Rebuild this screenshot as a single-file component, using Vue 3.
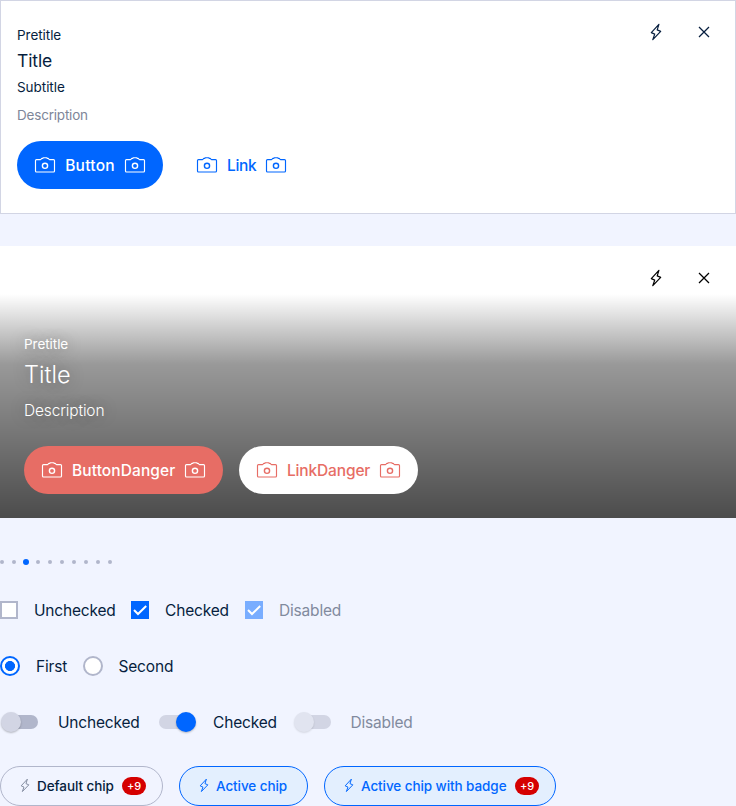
<script setup>
import { h } from 'vue'

const Camera = () =>
  h('svg', { class: 'camera', viewBox: '0 0 24 24', width: 24, height: 24 }, [
    h('path', {
      'stroke-width': 1.15,
      d: 'M3.5 6.6H7.2Q7.9 6.6 8.1 6.1L8.3 5.8Q8.5 5.4 9.1 5.4H9.8L10.4 4.7H13.6L14.2 5.4H14.9Q15.5 5.4 15.7 5.8L15.9 6.1Q16.1 6.6 16.8 6.6H20.5Q21.5 6.6 21.5 7.6V18Q21.5 19 20.5 19H3.5Q2.5 19 2.5 18V7.6Q2.5 6.6 3.5 6.6Z'
    }),
    h('circle', { cx: 12, cy: 12.8, r: 2.6, 'stroke-width': 1.4 })
  ])

const Bolt = (props) =>
  h('svg', { viewBox: props.size < 20 ? '2.2 3 19.6 19.6' : '0 0 24 24', width: props.size, height: props.size }, [
    h('path', { 'stroke-width': 1.2, d: 'M14.9 4.4L7.3 12.6L10.7 14.1L8.8 19.6L16.7 11.4L13.2 9.9Z' })
  ])
Bolt.props = ['size']

const Close = () =>
  h('svg', { viewBox: '0 0 24 24', width: 24, height: 24 }, [
    h('path', { d: 'M7 7L17 17M17 7L7 17', 'stroke-width': 1.25 })
  ])

const dots = 10
const activeDot = 2
const chips = [
  { label: 'Default chip', kind: 'plain', badge: '+9' },
  { label: 'Active chip', kind: 'active' },
  { label: 'Active chip with badge', kind: 'active wide', badge: '+9' }
]
</script>

<template>
  <main class="page">
    <section class="card">
      <div class="actions"><Bolt :size="24" /><Close /></div>
      <p class="small pretitle">Pretitle</p>
      <h2 class="title">Title</h2>
      <p class="small subtitle">Subtitle</p>
      <p class="small description">Description</p>
      <div class="buttons">
        <button class="btn primary"><Camera /><span class="t-button">Button</span><Camera /></button>
        <button class="btn link"><Camera /><span class="t-link">Link</span><Camera /></button>
      </div>
    </section>

    <section class="hero">
      <div class="actions dark"><Bolt :size="24" /><Close /></div>
      <div class="shade">
        <p class="small hero-pre">Pretitle</p>
        <h2 class="hero-title">Title</h2>
        <p class="hero-desc">Description</p>
        <div class="buttons">
          <button class="btn danger"><Camera /><span class="t-bd">ButtonDanger</span><Camera /></button>
          <button class="btn white"><Camera /><span class="t-ld">LinkDanger</span><Camera /></button>
        </div>
      </div>
    </section>

    <div class="dots">
      <span v-for="i in dots" :key="i" class="dot"><i :class="{ on: i - 1 === activeDot }"></i></span>
    </div>

    <div class="row checks">
      <label class="w131"><span class="box"></span><span class="text">Unchecked</span></label>
      <label class="w114"><span class="box on"><svg viewBox="0 0 18 18" width="18" height="18"><path d="M3 9L7 13L15.2 5" /></svg></span><span class="text">Checked</span></label>
      <label class="off"><span class="box on"><svg viewBox="0 0 18 18" width="18" height="18"><path d="M3 9L7 13L15.2 5" /></svg></span><span class="text">Disabled</span></label>
    </div>

    <div class="row radios">
      <label class="w83"><span class="radio on"></span><span class="text">First</span></label>
      <label><span class="radio"></span><span class="text">Second</span></label>
    </div>

    <div class="row switches">
      <label class="w155"><span class="switch"><i></i></span><span class="text">Unchecked</span></label>
      <label class="w138"><span class="switch on"><i></i></span><span class="text">Checked</span></label>
      <label class="off"><span class="switch"><i></i></span><span class="text">Disabled</span></label>
    </div>

    <div class="chips">
      <span v-for="c in chips" :key="c.label" class="chip" :class="c.kind">
        <Bolt :size="16" /><span class="chip-text">{{ c.label }}</span><b v-if="c.badge">{{ c.badge }}</b>
      </span>
    </div>
  </main>
</template>

<style>
body { background: #f1f4ff; overflow: hidden; }
</style>

<style scoped>
.page { width: 736px; height: 806px; overflow: hidden; font-family: Inter, "Liberation Sans", sans-serif; color: #061e3e; background: #f1f4ff; }
.page * { box-sizing: border-box; }
p, h2 { margin: 0; font-weight: 300; white-space: nowrap; }
svg { display: block; flex: none; fill: none; stroke: currentColor; stroke-width: 1; stroke-linejoin: round; }
.card { position: relative; height: 214px; padding: 24px 16px; background: #fff; border: 1px solid #d2d5e4; }
.actions { position: absolute; top: 19px; right: 19px; display: flex; gap: 24px; }
.small { font-size: 13.5px; line-height: 20px; font-weight: 370; letter-spacing: -0.05px; }
.title { font-size: 17.5px; line-height: 24px; margin: 4px 0; font-weight: 370; letter-spacing: -0.1px; }
.description { margin-top: 8px; color: #7e8699; letter-spacing: -0.2px; }
.buttons { display: flex; gap: 16px; margin-top: 16px; }
.btn { display: flex; align-items: center; height: 48px; gap: 8px; padding: 0 16px; border: 0; border-radius: 24px; font: 500 15.5px Inter, sans-serif; background: none; white-space: nowrap; }
.btn span { padding-top: 1px; }
.t-button { width: 50px; letter-spacing: 0.25px; }
.t-link { width: 29px; letter-spacing: -0.3px; }
.t-bd { width: 103px; letter-spacing: 0.1px; }
.t-ld { width: 83px; letter-spacing: -0.15px; }
.primary { background: #0066ff; color: #fff; }
.link { color: #0066ff; }
.danger { background: #e76d65; color: #fff; }
.white { background: #fff; color: #e76d65; }
.hero { position: relative; height: 272px; margin-top: 32px; padding-top: 48px; background: #fff; color: #fff; }
.actions.dark { top: 20px; right: 20px; color: #000; }
.shade { height: 224px; padding: 40px 24px 24px; background: linear-gradient(to bottom, rgba(0,0,0,0) 0, rgba(0,0,0,.4) 70px, rgba(0,0,0,.7) 100%); }
.shade p, .shade h2 { text-shadow: 0 0 16px rgba(0,0,0,.4); }
.hero-title { font-size: 23.5px; line-height: 32px; margin-top: 5px; }
.hero-desc { font-size: 15.5px; line-height: 24px; margin-top: 8px; font-weight: 330; letter-spacing: -0.15px; }
.shade .buttons { margin-top: 23px; }
.dots { display: flex; height: 12px; margin: 38px 0 0 -4px; }
.dot { display: flex; width: 12px; height: 12px; align-items: center; justify-content: center; }
.dot i { width: 4px; height: 4px; border-radius: 50%; background: #b1b6cb; }
.dot i.on { width: 6px; height: 6px; background: #0066ff; }
.row { display: flex; height: 24px; font-size: 15.5px; font-weight: 370; letter-spacing: -0.18px; }
.row label { display: flex; align-items: center; white-space: nowrap; }
.text { padding-top: 1px; }
.checks { margin-top: 30px; }
.radios, .switches { margin-top: 32px; }
.w131 { width: 131px; } .w114 { width: 114px; } .w83 { width: 82.5px; } .w155 { width: 155px; } .w138 { width: 137.5px; }
.box { width: 18px; height: 18px; margin-right: 16px; background: #fff; border: 2px solid #b1b6cb; }
.box.on { border: 0; background: #0066ff; color: #fff; }
.box path { stroke-width: 2; stroke-linejoin: miter; }
.off .box.on { background: #79adff; }
.off { color: #818a9e; }
.radio { width: 20px; height: 20px; margin-right: 16px; border-radius: 50%; border: 2px solid #b1b6cb; background: #fff; }
.radio.on { border-color: #0066ff; background: radial-gradient(circle, #0066ff 4.7px, #fff 5.3px); }
.switch { display: flex; align-items: center; width: 34px; height: 14px; margin: 0 20px 0 4px; border-radius: 7px; background: #b1b6cb; }
.switch i { flex: none; width: 20px; height: 20px; margin-left: -3px; border-radius: 50%; background: #d2d5e4; box-shadow: 0 1px 2px rgba(0,0,0,.25); }
.switch.on { background: #d2d5e4; }
.switch.on i { margin-left: 17px; background: #0066ff; }
.off .switch { background: #d2d5e4; }
.off .switch i { background: #e1e4f0; box-shadow: 0 1px 2px rgba(0,0,0,.12); }
.chips { display: flex; gap: 16px; margin-top: 32px; }
.chip { display: flex; align-items: center; width: 163px; height: 40px; padding-left: 16px; border: 1px solid #b1b6cb; border-radius: 20px; font-size: 13.5px; font-weight: 500; letter-spacing: -0.08px; white-space: nowrap; }
.chip svg { color: #818a9e; }
.chip.active { width: 129px; background: #e3effe; border-color: #0066ff; color: #0066ff; }
.chip.active svg { color: #0066ff; }
.chip.wide { width: 232px; }
.chip-text { margin-left: 4px; }
.chip b { margin: 0 16px 0 auto; width: 24px; height: 18px; border-radius: 9px; background: #d50000; color: #fff; font-size: 11px; line-height: 18px; font-weight: 500; text-align: center; }
</style>
